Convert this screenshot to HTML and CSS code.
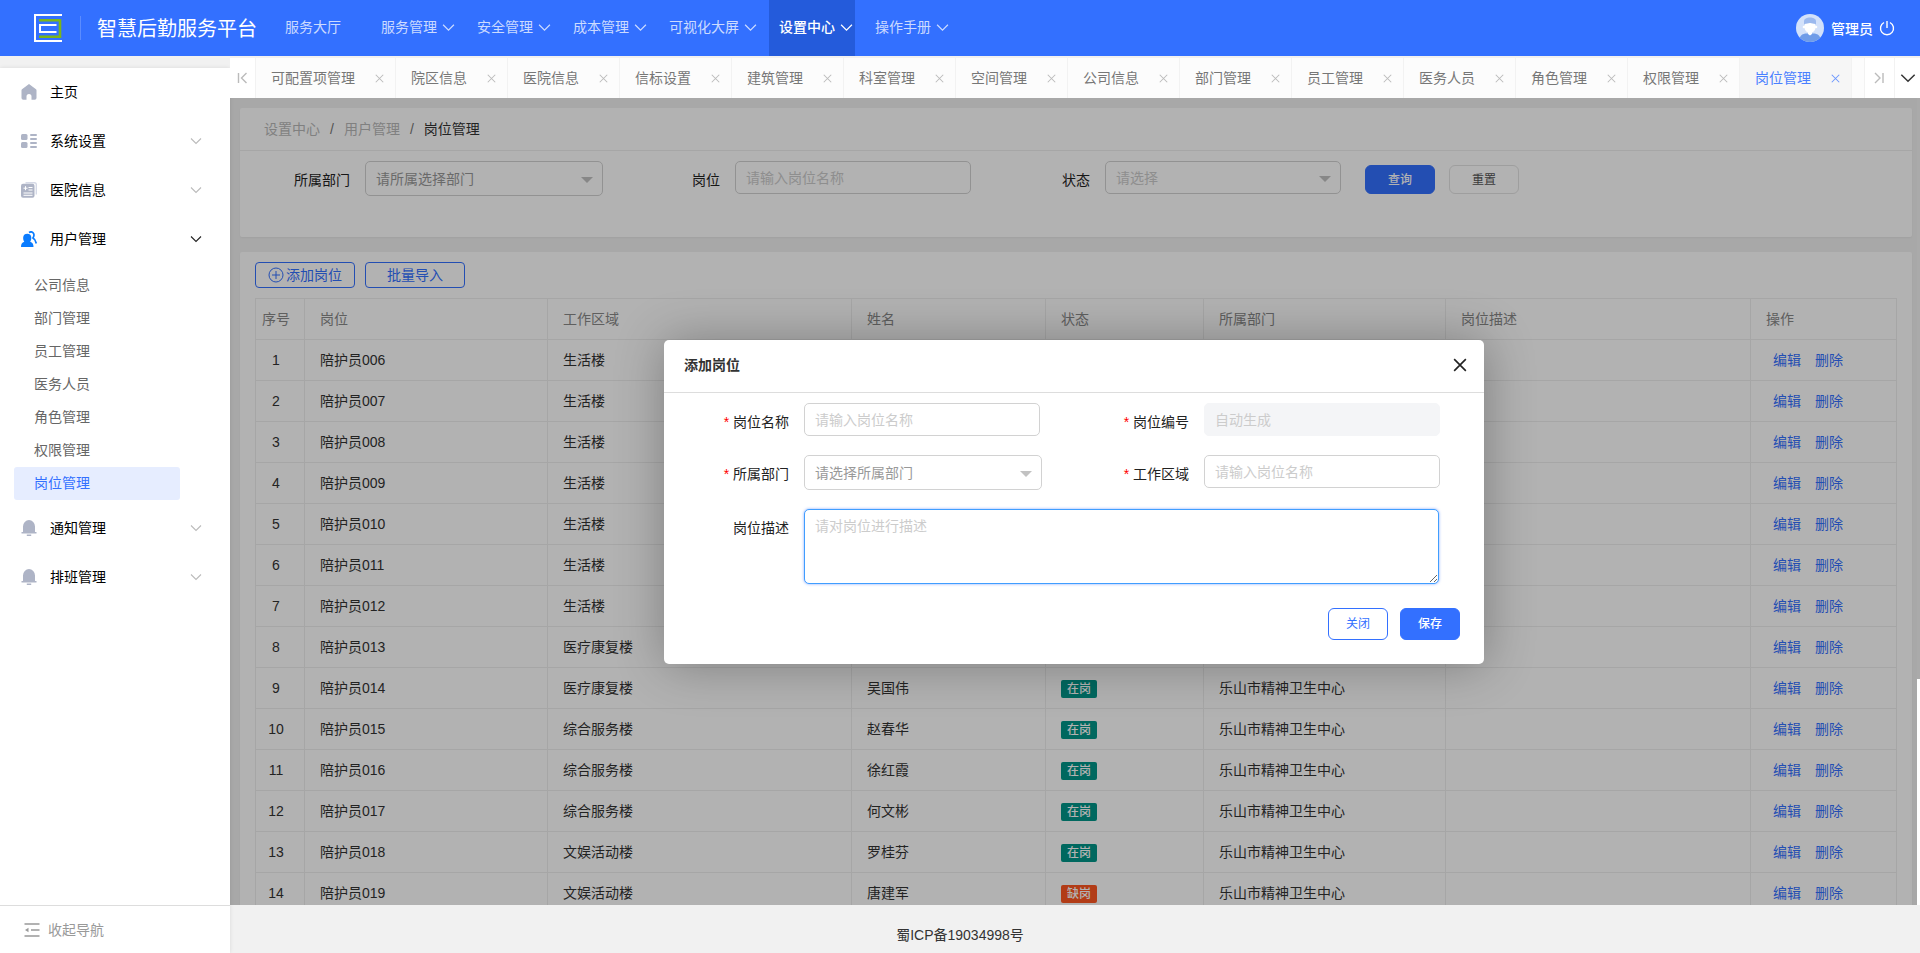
FILE: index.html
```html
<!DOCTYPE html>
<html lang="zh-CN">
<head>
<meta charset="utf-8">
<title>智慧后勤服务平台</title>
<meta name="viewport" content="width=device-width,initial-scale=1">
<link rel="stylesheet" href="styles.css">
</head>

<body>
<!-- 公用图标 -->
<svg class="sprite" aria-hidden="true">
  <symbol id="i-down" viewBox="0 0 12 12"><path d="M1 3.5l5 5 5-5" fill="none" stroke="currentColor" stroke-width="1.1"/></symbol>
  <symbol id="i-close" viewBox="0 0 12 12"><path d="M1 1l10 10M11 1L1 11" fill="none" stroke="currentColor" stroke-width="1.4"/></symbol>
  <symbol id="i-bell" viewBox="0 0 16 16"><path d="M.5 13.500v-1.500H2V6.500a6 6.500 0 0 1 12 0V12h1.500v1.500zM5.800 14.500h4.400v1.500H5.800z" fill="currentColor"/></symbol>
</svg>

<!-- 顶部导航 -->
<header class="header">
  <div class="logo">
    <svg width="28" height="28" viewBox="0 0 28 28">
      <path d="M28 1H1v26h27" fill="none" stroke="#fff" stroke-width="2"/>
      <path d="M5 6.2h21v16.6H5" fill="none" stroke="#7cb518" stroke-width="2.6"/>
      <path d="M22.5 11H6v7h16.500" fill="none" stroke="#fff" stroke-width="2"/>
    </svg>
  </div>
  <h1>智慧后勤服务平台</h1>
  <nav class="topnav">
    <a href="#">服务大厅</a>
    <a href="#">服务管理<svg><use href="#i-down"/></svg></a>
    <a href="#">安全管理<svg><use href="#i-down"/></svg></a>
    <a href="#">成本管理<svg><use href="#i-down"/></svg></a>
    <a href="#">可视化大屏<svg><use href="#i-down"/></svg></a>
    <a href="#" class="active">设置中心<svg><use href="#i-down"/></svg></a>
    <a href="#">操作手册<svg><use href="#i-down"/></svg></a>
  </nav>
  <div class="user">
    <svg width="28" height="28" viewBox="0 0 28 28">
      <defs><clipPath id="avatar"><circle cx="14" cy="14" r="14"/></clipPath></defs>
      <g clip-path="url(#avatar)">
        <rect width="28" height="28" fill="#d3e1fa"/>
        <path d="M3 28c0-6 3-8.500 8-8.500h6c5 0 8 2.500 8 8.500z" fill="#6f9ce8"/>
        <path d="M8 11V7.500C8 4.500 11 3.500 14 3.500s6 1 6 4V11z" fill="#9cb9ee"/>
        <path d="M8.500 10c2.500 0 3.500-1 5.500-1s3 1 5.500 1v3c0 3-1.500 4.500-3.500 5.500v1.500l-2 1.500-2-1.500v-1.500c-2-1-3.500-2.500-3.500-5.500z" fill="#fff"/>
        <circle cx="8" cy="13" r="1.300" fill="#fff"/><circle cx="20" cy="13" r="1.300" fill="#fff"/>
      </g>
    </svg>
    <span>管理员</span>
    <a href="#" aria-label="退出"><svg width="16" height="16" viewBox="0 0 16 16"><path d="M5 2.500a6.500 6.500 0 1 0 6 0M8 1v7" fill="none" stroke="#fff" stroke-width="1.400"/></svg></a>
  </div>
</header>

<div class="layout">
<!-- 左侧菜单 -->
<aside class="side">
  <nav class="menu">
    <a href="#" class="item">
      <svg class="ico" viewBox="0 0 16 16"><path d="M8 0l7 5.200q.5.400.5 1V14a1.800 1.800 0 0 1-1.800 1.800H10.500V12.500a2.500 2.500 0 0 0-5 0v3.300H2.300A1.800 1.800 0 0 1 .5 14V6.200q0-.6.500-1z" fill="currentColor"/></svg>
      <span>主页</span></a>
    <a href="#" class="item">
      <svg class="ico" viewBox="0 0 16 16"><g fill="currentColor"><rect y="1" width="6.500" height="6" rx="1.500"/><rect y="9" width="6.500" height="6" rx="1.500"/><rect x="9" y="1" width="7" height="2" rx="1"/><rect x="9" y="5" width="7" height="2" rx="1"/><rect x="9" y="9" width="7" height="2" rx="1"/><rect x="9" y="13" width="7" height="2" rx="1"/></g></svg>
      <span>系统设置</span><svg class="arrow"><use href="#i-down"/></svg></a>
    <a href="#" class="item">
      <svg class="ico" viewBox="0 0 16 16"><path d="M4.500.7h9q1.800 0 1.800 1.800v10" fill="none" stroke="#d5d9e6" stroke-width="1.400"/><rect y="1.700" width="13.500" height="14" rx="2" fill="#aeb4c6"/><path d="M7.500 5.500h4M7.500 8h4M2.500 11h9M2.500 13.300h9M4.500 4.200v4M2.500 6.200h4" stroke="#fff" stroke-width="1"/></svg>
      <span>医院信息</span><svg class="arrow"><use href="#i-down"/></svg></a>
    <a href="#" class="item open">
      <svg class="ico" viewBox="0 0 16 16"><path d="M0 16c0-3 1-4.500 3.300-5.200C1.500 8 1.500 2.700 6.300 2.700S11 8 9.200 10.800C11.500 11.500 12.500 13 12.500 16z" fill="#0a7cff"/><path d="M8 1.500C11.500-.5 14.500 3 12 7c1.800 1 2.800 3 3.300 5.500" fill="none" stroke="#0a7cff" stroke-width="1.700"/></svg>
      <span>用户管理</span><svg class="arrow"><use href="#i-down"/></svg></a>
    <div class="sub">
      <a href="#">公司信息</a>
      <a href="#">部门管理</a>
      <a href="#">员工管理</a>
      <a href="#">医务人员</a>
      <a href="#">角色管理</a>
      <a href="#">权限管理</a>
      <a href="#" class="active">岗位管理</a>
    </div>
    <a href="#" class="item"><svg class="ico"><use href="#i-bell"/></svg><span>通知管理</span><svg class="arrow"><use href="#i-down"/></svg></a>
    <a href="#" class="item"><svg class="ico"><use href="#i-bell"/></svg><span>排班管理</span><svg class="arrow"><use href="#i-down"/></svg></a>
  </nav>
  <button type="button" class="fold">
    <svg width="16" height="14" viewBox="0 0 16 14"><path d="M.5 1H15.500M7 7h8.500M.5 13H15.500" stroke="currentColor" stroke-width="1.400"/><path d="M1 7l3.500-2.200v4.400z" fill="currentColor"/></svg>
    收起导航</button>
</aside>

<div class="content">
  <!-- 页签 -->
  <div class="tabs">
    <button type="button" class="tab-btn" aria-label="向左"><svg width="12" height="12" viewBox="0 0 12 12"><path d="M1.500 1v10M9.500 1l-5 5 5 5" fill="none" stroke="currentColor" stroke-width="1.400"/></svg></button>
    <div class="tab-list">
      <a href="#">可配置项管理<svg><use href="#i-close"/></svg></a>
      <a href="#">院区信息<svg><use href="#i-close"/></svg></a>
      <a href="#">医院信息<svg><use href="#i-close"/></svg></a>
      <a href="#">信标设置<svg><use href="#i-close"/></svg></a>
      <a href="#">建筑管理<svg><use href="#i-close"/></svg></a>
      <a href="#">科室管理<svg><use href="#i-close"/></svg></a>
      <a href="#">空间管理<svg><use href="#i-close"/></svg></a>
      <a href="#">公司信息<svg><use href="#i-close"/></svg></a>
      <a href="#">部门管理<svg><use href="#i-close"/></svg></a>
      <a href="#">员工管理<svg><use href="#i-close"/></svg></a>
      <a href="#">医务人员<svg><use href="#i-close"/></svg></a>
      <a href="#">角色管理<svg><use href="#i-close"/></svg></a>
      <a href="#">权限管理<svg><use href="#i-close"/></svg></a>
      <a href="#" class="active">岗位管理<svg><use href="#i-close"/></svg></a>
    </div>
    <button type="button" class="tab-btn next" aria-label="向右"><svg width="12" height="12" viewBox="0 0 12 12"><path d="M9 1v10M1 1l5 5-5 5" fill="none" stroke="currentColor" stroke-width="1.400"/></svg></button>
    <button type="button" class="tab-btn more" aria-label="更多"><svg width="16" height="16"><use href="#i-down"/></svg></button>
  </div>

  <main class="frame">
    <section class="card">
      <div class="crumb"><a href="#">设置中心</a><i>/</i><a href="#">用户管理</a><i>/</i><span>岗位管理</span></div>
      <form class="filter">
        <div class="field">
          <label for="fDept">所属部门</label>
          <div class="select wide"><select id="fDept"><option>请所属选择部门</option></select></div>
        </div>
        <div class="field">
          <label for="fPost">岗位</label>
          <input id="fPost" type="text" placeholder="请输入岗位名称">
        </div>
        <div class="field">
          <label for="fState">状态</label>
          <div class="select light"><select id="fState"><option>请选择</option></select></div>
        </div>
        <div class="btns">
          <button type="button" class="btn primary">查询</button>
          <button type="reset" class="btn plain">重置</button>
        </div>
      </form>
    </section>

    <section class="card list">
      <div class="tools">
        <button type="button"><svg width="16" height="16" viewBox="0 0 16 16"><g fill="none" stroke="currentColor" stroke-width="1"><circle cx="8" cy="8" r="7"/><path d="M8 4v8M4 8h8"/></g></svg>添加岗位</button>
        <button type="button">批量导入</button>
      </div>
      <table>
        <colgroup><col class="c-no"><col class="c-post"><col class="c-area"><col class="c-name"><col class="c-state"><col class="c-dept"><col><col class="c-op"></colgroup>
        <thead>
          <tr><th>序号</th><th>岗位</th><th>工作区域</th><th>姓名</th><th>状态</th><th>所属部门</th><th>岗位描述</th><th>操作</th></tr>
        </thead>
        <tbody>
          <tr><td>1</td><td>陪护员006</td><td>生活楼</td><td></td><td></td><td></td><td></td><td><a href="#">编辑</a><a href="#">删除</a></td></tr>
          <tr><td>2</td><td>陪护员007</td><td>生活楼</td><td></td><td></td><td></td><td></td><td><a href="#">编辑</a><a href="#">删除</a></td></tr>
          <tr><td>3</td><td>陪护员008</td><td>生活楼</td><td></td><td></td><td></td><td></td><td><a href="#">编辑</a><a href="#">删除</a></td></tr>
          <tr><td>4</td><td>陪护员009</td><td>生活楼</td><td></td><td></td><td></td><td></td><td><a href="#">编辑</a><a href="#">删除</a></td></tr>
          <tr><td>5</td><td>陪护员010</td><td>生活楼</td><td></td><td></td><td></td><td></td><td><a href="#">编辑</a><a href="#">删除</a></td></tr>
          <tr><td>6</td><td>陪护员011</td><td>生活楼</td><td></td><td></td><td></td><td></td><td><a href="#">编辑</a><a href="#">删除</a></td></tr>
          <tr><td>7</td><td>陪护员012</td><td>生活楼</td><td></td><td></td><td></td><td></td><td><a href="#">编辑</a><a href="#">删除</a></td></tr>
          <tr><td>8</td><td>陪护员013</td><td>医疗康复楼</td><td></td><td></td><td></td><td></td><td><a href="#">编辑</a><a href="#">删除</a></td></tr>
          <tr><td>9</td><td>陪护员014</td><td>医疗康复楼</td><td>吴国伟</td><td><span class="badge">在岗</span></td><td>乐山市精神卫生中心</td><td></td><td><a href="#">编辑</a><a href="#">删除</a></td></tr>
          <tr><td>10</td><td>陪护员015</td><td>综合服务楼</td><td>赵春华</td><td><span class="badge">在岗</span></td><td>乐山市精神卫生中心</td><td></td><td><a href="#">编辑</a><a href="#">删除</a></td></tr>
          <tr><td>11</td><td>陪护员016</td><td>综合服务楼</td><td>徐红霞</td><td><span class="badge">在岗</span></td><td>乐山市精神卫生中心</td><td></td><td><a href="#">编辑</a><a href="#">删除</a></td></tr>
          <tr><td>12</td><td>陪护员017</td><td>综合服务楼</td><td>何文彬</td><td><span class="badge">在岗</span></td><td>乐山市精神卫生中心</td><td></td><td><a href="#">编辑</a><a href="#">删除</a></td></tr>
          <tr><td>13</td><td>陪护员018</td><td>文娱活动楼</td><td>罗桂芬</td><td><span class="badge">在岗</span></td><td>乐山市精神卫生中心</td><td></td><td><a href="#">编辑</a><a href="#">删除</a></td></tr>
          <tr><td>14</td><td>陪护员019</td><td>文娱活动楼</td><td>唐建军</td><td><span class="badge off">缺岗</span></td><td>乐山市精神卫生中心</td><td></td><td><a href="#">编辑</a><a href="#">删除</a></td></tr>
        </tbody>
      </table>
    </section>

    <!-- 添加岗位弹窗 -->
    <div class="shade">
      <div class="dialog" role="dialog" aria-labelledby="dlgTitle">
        <div class="dlg-head"><h2 id="dlgTitle">添加岗位</h2><button type="button" aria-label="关闭窗口"><svg width="14" height="14"><use href="#i-close"/></svg></button></div>
        <form>
          <div class="grid">
            <div class="field">
              <label for="dName"><b>*</b> 岗位名称</label>
              <input id="dName" type="text" placeholder="请输入岗位名称">
            </div>
            <div class="field">
              <label for="dCode"><b>*</b> 岗位编号</label>
              <input id="dCode" type="text" placeholder="自动生成" disabled>
            </div>
            <div class="field">
              <label for="dDept"><b>*</b> 所属部门</label>
              <div class="select wide"><select id="dDept"><option>请选择所属部门</option></select></div>
            </div>
            <div class="field">
              <label for="dArea"><b>*</b> 工作区域</label>
              <input id="dArea" type="text" placeholder="请输入岗位名称">
            </div>
            <div class="field full">
              <label for="dDesc">岗位描述</label>
              <textarea id="dDesc" placeholder="请对岗位进行描述"></textarea>
            </div>
          </div>
          <div class="dlg-foot">
            <button type="button" class="btn outline">关闭</button>
            <button type="button" class="btn primary">保存</button>
          </div>
        </form>
      </div>
    </div>
    <div class="scroll"></div>
  </main>

  <footer class="footer">蜀ICP备19034998号</footer>
</div>
</div>
</body>
</html>
```
FILE: styles.css
```css
:root{
  --c-primary:#3370ff;
  --c-bg:#f1f1f1;
  --c-border:#eee;
  --c-input:#d2d2d2;
  --c-text:#333;
}

/* 基础 */
*,*::before,*::after{box-sizing:border-box}
body{margin:0;height:100vh;display:flex;flex-direction:column;overflow:hidden;
     font:14px/20px "Liberation Sans","Noto Sans CJK SC",sans-serif;
     background:var(--c-bg);color:var(--c-text)}
a{color:inherit;text-decoration:none}
button,input,select,textarea{font:inherit;color:inherit;margin:0}
button{cursor:pointer;padding:0;border:0;background:none}
h1,h2{margin:0;font-size:inherit}
svg{flex:none}
.sprite{position:absolute;width:0;height:0}

/* 顶部 */
.header{flex:none;display:flex;align-items:center;height:56px;padding-right:25px;
        background:var(--c-primary);color:#fff}
.logo{display:flex;align-items:center;width:81px;height:24px;padding-left:34px;
      border-right:1px solid rgba(255,255,255,.2)}
.header h1{padding:2px 18px 0 16px;font-size:20px;font-weight:400;line-height:28px}
.topnav{display:flex;gap:10px}
.topnav a{display:flex;align-items:center;gap:5px;height:56px;min-width:86px;
          padding:0 2px 2px 10px;color:rgba(255,255,255,.75)}
.topnav svg{width:13px;height:13px}
.topnav .active{background:#245bdb;color:#fff;font-weight:500}
.user{display:flex;align-items:center;gap:6px;margin-left:auto}
.user a{display:flex}
.user span{padding:1px 0 0 1px;font-weight:500}

.layout{flex:1;display:flex;min-height:0}

/* 侧边菜单 */
.side{flex:none;width:230px;margin-top:12px;display:flex;flex-direction:column;
      background:#fff;box-shadow:0 0 4px rgba(0,0,0,.1)}
.menu{flex:1}
.item{display:flex;align-items:center;height:49px;padding:0 28px 2px 21px;color:#000}
.item span{flex:1;padding-left:13px}
.item .ico{width:16px;height:16px;color:#aeb4c6}
.arrow{width:12px;height:12px;color:#bbb}
.open .arrow{color:#222}
.sub{padding:5px 50px 4px 14px}
.sub a{display:block;height:33px;padding-left:20px;line-height:32px;color:#666;border-radius:3px}
.sub .active{background:#e6edff;color:var(--c-primary)}
.fold{display:flex;align-items:center;gap:8px;height:48px;padding:0 24px;
      border-top:1px solid #ddd;color:#999}

/* 内容区 */
.content{flex:1;min-width:0;display:flex;flex-direction:column}
.tabs{flex:none;display:flex;height:42px;border-top:2px solid var(--c-bg);background:#fff}
.tab-btn{flex:none;display:flex;align-items:center;justify-content:center;width:26px;
         border-right:1px solid #f2f2f2;color:#bbb}
.tab-btn.next{width:31px;border-left:1px solid #f2f2f2}
.tab-btn.more{width:25px;border:0;color:#333}
.tab-list{flex:1;display:flex;overflow:hidden;background:#fcfcfc}
.tab-list a{flex:none;display:flex;align-items:center;gap:20px;padding:0 11px 0 15px;
            border-right:1px solid #f2f2f2;color:#777}
.tab-list svg{width:9px;height:9px;color:#bbb}
.tab-list .active{background:#f6f6f6;color:#4a80ff}
.tab-list .active svg{color:#6a96ff}

.frame{flex:1;min-height:0;position:relative;overflow:hidden;padding:10px 8px 0 10px}
.card{background:#fff;border-radius:2px;box-shadow:0 1px 2px rgba(0,0,0,.05)}
.crumb{display:flex;height:43px;padding-left:24px;line-height:42px;
       border-bottom:1px solid var(--c-border);color:#b8b8b8}
.crumb i{padding:0 10px;font-style:normal;color:#777}
.crumb span{color:#333}

/* 表单 */
.field{display:flex}
.field label{flex:none;width:110px;padding:9px 15px 0 0;text-align:right;color:#222}
.field b{font-weight:400;color:red}
.field input,.select{flex:none;width:236px;height:33px}
.field input,.select select,textarea{padding:0 10px;border:1px solid var(--c-input);
     border-radius:5px;background:#fff;outline:0}
.select{position:relative}
.select.wide{width:238px;height:35px}
.select select{appearance:none;width:100%;height:100%;color:#999}
.select.light select{color:#ccc}
.select::after{content:"";position:absolute;right:10px;top:50%;margin-top:-2px;
     border:6px solid transparent;border-top-color:#c2c2c2;border-bottom:0;pointer-events:none}
::placeholder{color:#ccc;opacity:1}
.field input:disabled{background:#f4f5f7;border-color:#f4f5f7}
.filter{display:flex;gap:24px;height:86px;padding:10px 15px}
.filter .field{width:346px}
.btns{display:flex;gap:14px;padding-top:4px}
.btn{width:60px;height:32px;border:1px solid var(--c-primary);border-radius:6px;
     font-size:12px;line-height:1}
.btns .btn{width:70px;height:29px}
.primary{background:var(--c-primary);color:#fff;font-weight:500}
.plain{border-color:#e3e3e3;color:#555}
.outline{color:var(--c-primary)}

/* 列表 */
.list{margin-top:15px;padding:10px 15px}
.tools{display:flex;gap:10px;margin-bottom:10px}
.tools button{display:flex;align-items:center;justify-content:center;gap:2px;width:100px;height:26px;
     border:1px solid var(--c-primary);border-radius:4px;color:var(--c-primary)}
table{width:100%;table-layout:fixed;border-collapse:collapse}
th,td{height:41px;padding:0 15px;border:1px solid var(--c-border);text-align:left}
th{font-weight:400;color:#888}
td a{margin-left:7px;color:var(--c-primary)}
td a + a{margin-left:14px}
th:first-child,td:first-child{padding:0 8px 0 0;text-align:center}
.c-no{width:49px}
.c-post{width:243px}
.c-area{width:304px}
.c-name{width:194px}
.c-state{width:158px}
.c-dept{width:242px}
.c-op{width:146px}
.badge{display:inline-block;padding:0 6px;border-radius:2px;background:#009688;
       color:#fff;font-size:12px;font-weight:500;line-height:18px;vertical-align:middle}
.badge.off{background:#ff5722}

/* 弹窗 */
.shade{position:absolute;inset:0;display:flex;align-items:center;justify-content:center;
       padding:1px 2px 0 0;background:rgba(0,0,0,.3)}
.dialog{width:820px;background:#fff;border-radius:5px;box-shadow:1px 1px 50px rgba(0,0,0,.3)}
.dlg-head{display:flex;align-items:center;justify-content:space-between;height:53px;
          padding:0 17px 2px 20px;border-bottom:1px solid #ddd}
.dlg-head button{display:flex;color:#222}
.grid{display:grid;grid-template-columns:400px 400px;row-gap:19px;padding-top:10px}
.dialog .field{min-height:33px}
.dialog .field label{width:140px}
.full{grid-column:span 2}
textarea{width:635px;height:75px;padding:6px 10px;line-height:20px;resize:vertical}
.full textarea{border-color:#409eff;box-shadow:0 0 3px rgba(51,112,255,.6)}
.dlg-foot{display:flex;justify-content:flex-end;gap:12px;padding:24px}
.scroll{position:absolute;top:0;right:0;width:3px;height:100%;
        background:linear-gradient(#aaa 72%,#fff 72%)}

.footer{flex:none;height:48px;padding:20px 230px 0 0;text-align:center}
```
